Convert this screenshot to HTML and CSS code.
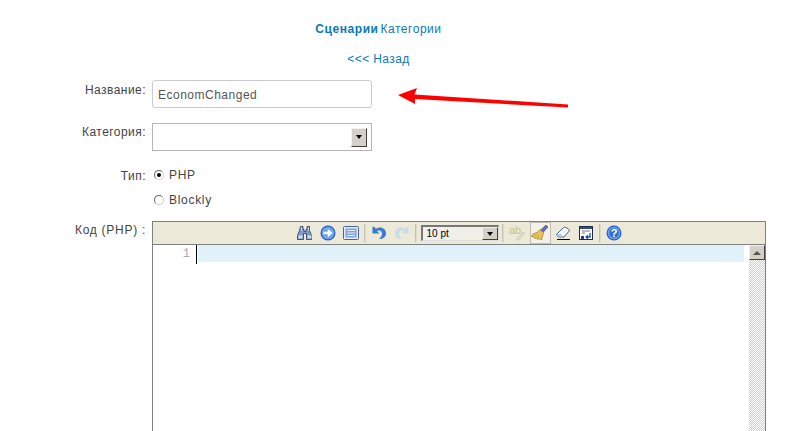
FILE: index.html
```html
<!DOCTYPE html>
<html lang="ru">
<head>
<meta charset="utf-8">
<title>Сценарии</title>
<link rel="stylesheet" href="styles.css">
</head>
<body>
<div class="page">
  <nav class="tabs"><a class="tab active" href="#">Сценарии</a> <a class="tab" href="#">Категории</a></nav>
  <div class="back"><a href="#">&lt;&lt;&lt; Назад</a></div>
  <form class="form">
    <div class="row row-name">
      <label class="label">Название:</label>
      <input class="text-input" type="text" value="EconomChanged">
    </div>
    <div class="row row-cat">
      <label class="label">Категория:</label>
      <div class="select"><span class="drop"><i class="drop-arrow"></i></span></div>
    </div>
    <div class="row row-type">
      <label class="label">Тип:</label>
      <div class="radios">
        <div class="radio-line"><span class="radio on"></span>PHP</div>
        <div class="radio-line"><span class="radio"></span>Blockly</div>
      </div>
    </div>
    <div class="row row-code">
      <label class="label">Код (PHP) :</label>
      <div class="editor">
        <div class="toolbar">
          <svg class="ic" viewBox="0 0 16 16"><path d="M3.500 1.500h2.500v3h1v2h2v-2h1v-3h2.500v4l2 5v4H9.500V8.500h-3v6H.5v-4l2-5z" fill="#7f9cc9" stroke="#33476f" stroke-width=".9"/><path d="M4 2.500h1v3H4zM11 2.500h1v3h-1z" fill="#dfe8f5"/><rect x="1.500" y="10.500" width="4" height="3" fill="#cfdcf0"/><rect x="10.500" y="10.500" width="4" height="3" fill="#cfdcf0"/></svg>
          <svg class="ic" viewBox="0 0 16 16"><circle cx="8" cy="8" r="7.500" fill="#1f5fc8"/><circle cx="8" cy="8" r="6.300" fill="#6fa5ee"/><path d="M3.500 6.800h4.300V3.800L12.500 8l-4.700 4.200V9.200H3.500z" fill="#fff"/></svg>
          <svg class="ic" viewBox="0 0 16 16"><rect x=".5" y="1.500" width="15" height="13" rx="1" fill="#e3ebf8" stroke="#44679f"/><rect x="2.500" y="3.500" width="11" height="9" fill="#7fa3dc"/><path d="M4 5.500h8M4 8h8M4 10.500h8" stroke="#e7effa"/></svg>
          <span class="sep"></span>
          <svg class="ic" viewBox="0 0 16 16"><path d="M1.500 1.500v7h7L6 6C8.200 4.800 11 5.800 11 8.500c0 2-1 3.700-3 5.500 4 .5 7-2 7-5.700C15 3.500 9.500 .8 4.800 3.800L3.500 2z" fill="#3a7bd0"/></svg>
          <svg class="ic" viewBox="0 0 16 16"><path d="M14.500 1.500v7h-7L10 6C7.800 4.800 5 5.800 5 8.500c0 2 1 3.700 3 5.500-4 .5-7-2-7-5.700C1 3.500 6.500 .8 11.200 3.800L12.500 2z" fill="#ccdbe2"/></svg>
          <span class="sep"></span>
          <div class="size-select"><span class="size-value">10 pt</span><span class="drop small"><i class="drop-arrow"></i></span></div>
          <span class="sep"></span>
          <svg class="ic" viewBox="0 0 16 16"><text x="0" y="9" class="ab">ab</text><path d="M8 14l6-7 1.500 1.500-6 6.500H8z" fill="#e4e2d2" stroke="#bdbba6" stroke-width=".7"/></svg>
          <span class="pressed"><svg class="ic brush" viewBox="0 0 18 18"><path d="M15 1l2 2-5 5.500-2.500-2.500z" fill="#6d6bb5" stroke="#46447f" stroke-width=".6"/><path d="M9 5.500l3.500 3.500-2 7-2.500-1.500-1.500 1-1-1.800-2 .7-1-2-2 .3 1.500-3C4 9.500 7.500 8 9 5.500z" fill="#e8c75a" stroke="#9a7b22" stroke-width=".7"/><path d="M6 10l-2 2M8 11l-1.500 2.500" stroke="#b08f2c" stroke-width=".7"/></svg></span>
          <svg class="ic" viewBox="0 0 16 16"><path d="M1.500 9.500L8 3c1-1 2-1 3-.5l2.500 1.500c1 .8 1 1.800 0 2.800L9 12H3.500z" fill="#f2f5fb" stroke="#48608e"/><path d="M1.500 9.500l2.500 2.300 4.500-.1-3-3z" fill="#b6c7e6"/><path d="M2 14.500h13" stroke="#000"/></svg>
          <svg class="ic" viewBox="0 0 16 16"><rect x="1.500" y="1.500" width="13" height="13" fill="#fff" stroke="#1e2a4a"/><rect x="2" y="2" width="12" height="2" fill="#3a4a78"/><path d="M4 6h8M4 8h3" stroke="#777"/><rect x="3" y="11" width="3" height="3" fill="#1f3f8c"/><path d="M12 8v4H8.500M10 10.300L8 12l2 1.700" stroke="#1f4fc0" stroke-width="1.300" fill="none"/></svg>
          <span class="sep"></span>
          <svg class="ic" viewBox="0 0 16 16"><circle cx="8" cy="8" r="7.500" fill="#1f5fc8"/><circle cx="8" cy="8" r="6.300" fill="#6fa5ee"/><circle cx="8" cy="8" r="4.800" fill="#2f70d4"/><text x="8" y="12" class="help">?</text></svg>
        </div>
        <div class="code">
          <div class="gutter">1</div>
          <div class="lines"><div class="active-line"></div></div>
          <div class="scrollbar"><span class="scroll-up"><i class="up-arrow"></i></span></div>
        </div>
      </div>
    </div>
  </form>
  <svg class="arrow" viewBox="0 0 172 24" aria-hidden="true"><path d="M0 9L19 2 16.500 8.500 170 18.500V21.500L17 13 17 18z" fill="#f00"/></svg>
</div>
</body>
</html>
```
FILE: styles.css
```css
html, body { margin: 0; padding: 0; height: 431px; overflow: hidden; background: #fff; }
body { font-family: "Liberation Sans", Arial, sans-serif; font-size: 12px; color: #444; }
.page { position: relative; width: 803px; height: 431px; overflow: hidden; }
a { color: #0a7ab8; text-decoration: none; }
.tabs { width: 757px; height: 14px; margin: 0; padding-top: 22px; text-align: center; line-height: 14px; letter-spacing: .55px; word-spacing: -2px; }
.tab.active { font-weight: bold; }
.back { width: 757px; padding-top: 16px; height: 15px; line-height: 15px; text-align: center; letter-spacing: .4px; }
.form { display: block; }
.row { display: flex; align-items: flex-start; }
.label { width: 146px; text-align: right; flex: none; margin-right: 6px; letter-spacing: .45px; line-height: 14px; }
.row-name { margin-top: 13px; }
.row-name .label { padding-top: 3px; }
.text-input { box-sizing: border-box; width: 220px; height: 28px; border: 1px solid #ccc; border-radius: 3px; padding: 1px 5px 0; font: 12px "Liberation Sans", Arial, sans-serif; letter-spacing: .5px; color: #555; background: #fff; outline: 0; }
.row-cat { margin-top: 15px; }
.row-cat .label { padding-top: 2px; }
.select { box-sizing: border-box; width: 220px; height: 28px; border: 1px solid #b5b5b5; display: flex; align-items: center; justify-content: flex-end; padding-right: 4px; }
.drop { box-sizing: border-box; display: flex; align-items: center; justify-content: center; width: 16px; height: 19px; background: #d4d0c8; border: 1px solid; border-color: #f4f2ec #404040 #404040 #f4f2ec; }
.drop-arrow { display: block; width: 0; height: 0; border: 3.500px solid transparent; border-top: 4px solid #000; border-bottom: 0; }
.row-type { margin-top: 16px; }
.row-type .label { padding-top: 2px; }
.radios { display: flex; flex-direction: column; gap: 9px; }
.radio-line { display: flex; align-items: center; height: 16px; letter-spacing: .7px; color: #444; }
.radio { box-sizing: border-box; width: 10px; height: 10px; margin: 0 5px 0 2px; border-radius: 50%; border: 1px solid #666; border-right-color: #ccc; border-bottom-color: #ccc; background: #fff; position: relative; }
.radio.on::after { content: ""; position: absolute; left: 2px; top: 2px; width: 4px; height: 4px; border-radius: 50%; background: #000; }
.row-code { margin-top: 13px; }
.row-code .label { padding-top: 2px; letter-spacing: .72px; }
.editor { box-sizing: border-box; width: 614px; height: 260px; border: 1px solid #808080; flex: none; display: flex; flex-direction: column; }
.toolbar { flex: none; height: 22px; background: #ece9d8; border-bottom: 1px solid #808080; display: flex; align-items: center; justify-content: center; padding-left: 1px; }
.ic { width: 16px; height: 16px; margin: 0 3.500px; flex: none; display: block; }
.ab { font: 11px "Liberation Sans", sans-serif; fill: #c9bf78; }
.help { font: bold 11px "Liberation Sans", sans-serif; fill: #fff; text-anchor: middle; }
.sep { width: 1px; height: 18px; margin: 0 2px 0 1px; background: #c4c2b6; flex: none; border-right: 1px solid #dedbca; }
.pressed { display: flex; align-items: center; justify-content: center; box-sizing: border-box; width: 21px; height: 22px; margin: 0 1px; background: #f3f2ea; border: 1px solid #c0beb2; flex: none; }
.pressed .ic.brush { margin: 0; width: 18px; height: 18px; }
.size-select { box-sizing: border-box; width: 78px; height: 16px; margin: 0 2px; background: #f0efe8; border-style: solid; border-width: 2px 1px 1px 2px; border-color: #777 #ddd #ddd #777; display: flex; align-items: center; justify-content: space-between; padding: 0 0 0 4px; font-size: 10px; color: #000; flex: none; }
.drop.small { width: 16px; height: 13px; }
.code { flex: 1; display: flex; min-height: 0; }
.gutter { box-sizing: border-box; width: 43px; flex: none; padding: 2px 6px 0 0; text-align: right; font: 12px/14px "Liberation Mono", monospace; color: #aaa; }
.lines { flex: 1; border-left: 1px solid #000; background: #fff; height: 19px; padding-left: 1px; }
.active-line { height: 17px; background: #e0f1f9; width: 546px; }
.scrollbar { width: 16px; margin-left: 3px; flex: none; background: repeating-conic-gradient(#d4d0c8 0 25%, #fff 0 50%) 0 0 / 2px 2px; }
.scroll-up { box-sizing: border-box; display: flex; align-items: center; justify-content: center; width: 16px; height: 15px; background: #d4d0c8; border: 1px solid; border-color: #f4f2ec #404040 #404040 #f4f2ec; }
.up-arrow { display: block; width: 0; height: 0; border: 4px solid transparent; border-bottom: 4px solid #555; border-top: 0; }
.arrow { position: absolute; left: 398px; top: 86px; width: 172px; height: 24px; }
```
